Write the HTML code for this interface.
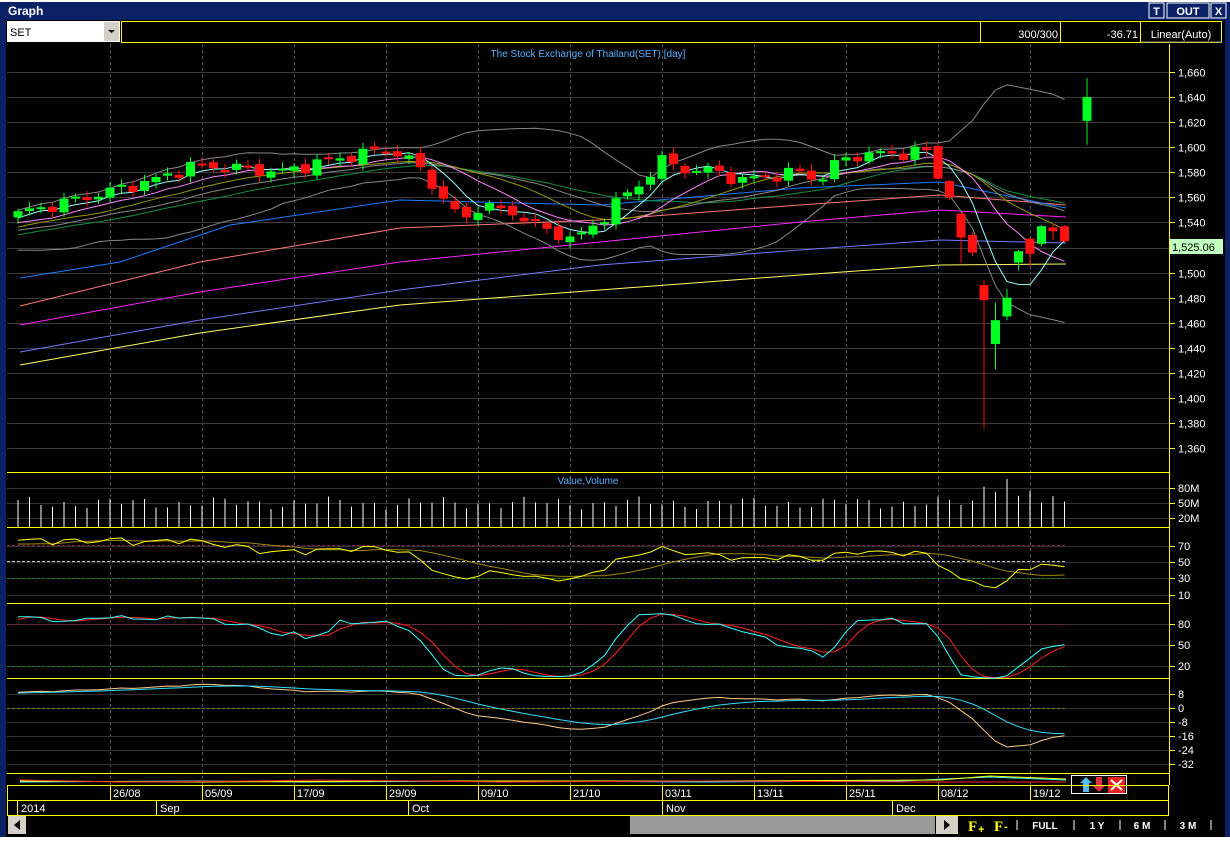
<!DOCTYPE html>
<html><head><meta charset="utf-8">
<style>
html,body{margin:0;padding:0;background:#000;width:1230px;height:842px;overflow:hidden;font-family:"Liberation Sans",sans-serif}
#frame{position:absolute;left:0;top:0;width:1230px;height:842px;background:#0c2266}
svg{position:absolute;left:0;top:0}
</style></head><body>
<div id="frame"></div>
<svg id="s" width="1230" height="842" xmlns="http://www.w3.org/2000/svg" font-family="Liberation Sans, sans-serif"></svg>
<script>
var S=document.getElementById('s');var out=[];
function a(t){out.push(t);}
a('<rect x="0" y="0" width="1230" height="842" fill="#0c2266"/>');
a('<rect x="0" y="0" width="1230" height="2" fill="#fff"/>');
a('<text x="8" y="15" fill="#fff" font-size="12" font-weight="bold">Graph</text>');
a('<rect x="1149" y="3" width="15" height="15" fill="#0c2266" stroke="#fff"/><text x="1156.5" y="15" fill="#fff" font-size="11" font-weight="bold" text-anchor="middle">T</text>');
a('<rect x="1167" y="3" width="42" height="15" fill="#0c2266" stroke="#fff"/><text x="1188" y="15" fill="#fff" font-size="11" font-weight="bold" text-anchor="middle">OUT</text>');
a('<rect x="1211" y="3" width="15" height="15" fill="#0c2266" stroke="#fff"/><text x="1218.5" y="15" fill="#fff" font-size="11" font-weight="bold" text-anchor="middle">X</text>');
a('<rect x="6" y="20" width="1219" height="817" fill="#000"/>');
a('<rect x="7" y="21" width="113" height="21" fill="#fff"/><text x="10" y="36" font-size="11" fill="#000">SET</text>');
a('<rect x="104" y="22" width="15" height="19" fill="#d4d0c8"/><path d="M108 30h7l-3.5 3z" fill="#000"/>');
a('<rect x="121.5" y="21.5" width="1100" height="21" fill="#000" stroke="#ff0"/>');
a('<line x1="980.5" y1="22" x2="980.5" y2="42" stroke="#ff0"/><line x1="1060.5" y1="22" x2="1060.5" y2="42" stroke="#ff0"/><line x1="1140.5" y1="22" x2="1140.5" y2="42" stroke="#ff0"/>');
a('<text x="1058" y="38" fill="#fff" font-size="11" text-anchor="end">300/300</text><text x="1138" y="38" fill="#fff" font-size="11" text-anchor="end">-36.71</text>');
a('<text x="1181" y="38" fill="#fff" font-size="11" text-anchor="middle">Linear(Auto)</text><line x1="1141" y1="42" x2="1222" y2="42" stroke="#888"/>');
var L=7,R=1169;
var vx=[110,202,294,386,478,570,662,754,846,938,1030];
vx.forEach(function(x){a('<line x1="'+(x+.5)+'" y1="44" x2="'+(x+.5)+'" y2="785" stroke="#555" stroke-dasharray="3,3"/>');});
function py(p){return 72+(1660-p)*1.2537;}
for(var p=1360;p<=1660;p+=20){var y=Math.round(py(p))+.5;a('<line x1="'+L+'" y1="'+y+'" x2="'+R+'" y2="'+y+'" stroke="#3a3a3a"/>');a('<line x1="'+R+'" y1="'+y+'" x2="'+(R+6)+'" y2="'+y+'" stroke="#ff0"/>');a('<text x="1178" y="'+(y+4)+'" fill="#fff" font-size="11">'+(p+'').replace(/^(\d)/,'$1,')+'</text>');}
a('<text x="588" y="57" fill="#5ab0ff" font-size="10" text-anchor="middle">The Stock Exchange of Thailand(SET) [day]</text>');
var kp=[[18,1547],[60,1555],[110,1565],[160,1575],[190,1585],[230,1584],[280,1580],[320,1588],[370,1596],[386,1598],[410,1590],[430,1575],[445,1555],[465,1542],[478,1553],[500,1550],[520,1546],[540,1535],[570,1528],[585,1530],[600,1542],[615,1555],[640,1570],[660,1590],[680,1583],[720,1580],[740,1573],[760,1576],[800,1580],[820,1574],[840,1590],[860,1594],[900,1595],[930,1597]];
function interp(x){for(var i=0;i<kp.length-1;i++){if(x<=kp[i+1][0]){var t=(x-kp[i][0])/(kp[i+1][0]-kp[i][0]);return kp[i][1]+t*(kp[i+1][1]-kp[i][1]);}}return kp[kp.length-1][1];}
var C=[];var prev=1544;
for(var i=0;i<80;i++){var x=18+i*11.5;var c=interp(x)+4*Math.sin(i*1.7)+2*Math.cos(i*2.9);var o=prev+2*Math.sin(i*3.1);var h=Math.max(o,c)+2+3*Math.abs(Math.sin(i*1.3));var l=Math.min(o,c)-2-3*Math.abs(Math.cos(i*2.1));C.push([x,o,h,l,c]);prev=c;}
var last=[[1601,1604,1574,1575],[1573,1574,1558,1560],[1547,1548,1508,1528],[1530,1532,1513,1516],[1490,1494,1376,1478],[1443,1476,1423,1462],[1465,1487,1462,1480],[1508,1518,1502,1517],[1527,1528,1505,1515],[1523,1538,1521,1537],[1536,1539,1526,1533],[1537,1538,1524,1525]];
for(var j=0;j<12;j++){var q=last[j];C.push([18+(80+j)*11.5,q[0],q[1],q[2],q[3]]);}
var cl=[];for(var k=0;k<200;k++){cl.push(1300+245*k/200+6*Math.sin(k*0.7));}
var off=cl.length;C.forEach(function(c){cl.push(c[4]);});
function sma(n,i){var s=0;for(var k=i-n+1;k<=i;k++)s+=cl[k];return s/n;}
function line(fn,col,w){var pts=[];for(var i=0;i<C.length;i++){var v=fn(i+off);if(v!==null)pts.push(C[i][0].toFixed(1)+','+py(v).toFixed(1));}a('<polyline points="'+pts.join(' ')+'" fill="none" stroke="'+col+'" stroke-width="'+(w||1)+'"/>');}
function poly(p,col){a('<polyline points="'+p+'" fill="none" stroke="'+col+'"/>');}
poly('20,365 200,333 400,305 600,290 800,275 940,265 1066,264','#ffff66');
poly('20,352 200,320 400,290 600,265 800,250 940,240 1066,243','#7777ff');
poly('20,325 200,292 400,262 620,240 800,222 940,210 1066,217','#ff22ff');
poly('20,306 200,262 400,228 600,220 800,205 940,195 1066,205','#ff7777');
poly('20,278 120,262 230,225 400,200 600,205 800,188 940,182 1066,208','#1a7cff');
function sd(n,i){var m=sma(n,i),s=0;for(var k=i-n+1;k<=i;k++)s+=(cl[k]-m)*(cl[k]-m);return Math.sqrt(s/n);}
line(function(i){return sma(20,i)+2*sd(20,i)},'#888');
line(function(i){return sma(20,i)-2*sd(20,i)},'#888');
line(function(i){return sma(25,i)},'#109040');
line(function(i){return sma(20,i)},'#888');
line(function(i){return sma(15,i)},'#999900');
line(function(i){return sma(10,i)},'#ff88ff');
line(function(i){return sma(5,i)},'#99ffff');
function candle(x,o,h,l,c){var col=c>=o?'#00ff22':'#ff1111';var yo=py(o),yc=py(c);var t=Math.min(yo,yc),b=Math.max(yo,yc);if(b-t<2){b=t+2;}a('<line x1="'+x+'" y1="'+py(h)+'" x2="'+x+'" y2="'+py(l)+'" stroke="'+col+'"/>');a('<rect x="'+(x-4.5)+'" y="'+t+'" width="9" height="'+(b-t)+'" fill="'+col+'"/>');}
C.forEach(function(c){candle(c[0],c[1],c[2],c[3],c[4]);});
candle(1087,1621,1655,1602,1640);
a('<rect x="1169" y="239" width="54" height="15" fill="#c0ffc0"/><text x="1172" y="251" fill="#000" font-size="11">1,525.06</text>');
[472,527,603,678,773,785].forEach(function(y){a('<line x1="'+L+'" y1="'+(y+.5)+'" x2="'+R+'" y2="'+(y+.5)+'" stroke="#ff0"/>');});
a('<line x1="'+(R+.5)+'" y1="44" x2="'+(R+.5)+'" y2="785" stroke="#ff0"/>');
a('<text x="588" y="484" fill="#5ab0ff" font-size="10" text-anchor="middle">Value,Volume</text>');
[[488,'80M'],[503,'50M'],[518,'20M']].forEach(function(v){a('<line x1="'+L+'" y1="'+(v[0]+.5)+'" x2="'+R+'" y2="'+(v[0]+.5)+'" stroke="#333"/><line x1="'+R+'" y1="'+(v[0]+.5)+'" x2="'+(R+6)+'" y2="'+(v[0]+.5)+'" stroke="#ff0"/><text x="1178" y="'+(v[0]+4)+'" fill="#fff" font-size="11">'+v[1]+'</text>');});
C.forEach(function(c,i){var h=24+4*Math.sin(i*1.9)+3*Math.cos(i*0.7);if(i>=84&&i<89)h=36+6*Math.sin(i);if(i==86)h=48;a('<line x1="'+c[0]+'" y1="527" x2="'+c[0]+'" y2="'+(527-h)+'" stroke="#fff"/>');});
function gl(y,lab){a('<line x1="'+L+'" y1="'+(y+.5)+'" x2="'+R+'" y2="'+(y+.5)+'" stroke="#333"/><line x1="'+R+'" y1="'+(y+.5)+'" x2="'+(R+6)+'" y2="'+(y+.5)+'" stroke="#ff0"/><text x="1178" y="'+(y+4)+'" fill="#fff" font-size="11">'+lab+'</text>');}
[[546,'70'],[562,'50'],[578,'30'],[595,'10']].forEach(function(v){gl(v[0],v[1]);});
function dash(y,col){a('<line x1="'+L+'" y1="'+y+'" x2="1066" y2="'+y+'" stroke="'+col+'" stroke-dasharray="3,2"/>');}
dash(545.5,'#802040');dash(561.5,'#ccc');dash(578.5,'#208020');
var rsi=[],ag=0,al=0;for(var i=1;i<cl.length;i++){var d=cl[i]-cl[i-1];var g=d>0?d:0,l=d<0?-d:0;if(i<=14){ag+=g/14;al+=l/14;}else{ag=(ag*13+g)/14;al=(al*13+l)/14;}rsi[i]=100-100/(1+ag/(al||1e-6));}
function pl(arr,map,col){var pts=[];for(var i=0;i<C.length;i++){pts.push(C[i][0].toFixed(1)+','+map(arr[i+off]).toFixed(1));}a('<polyline points="'+pts.join(' ')+'" fill="none" stroke="'+col+'"/>');}
var rm=function(v){return 546+(70-v)*0.8;};
var rsis=[];for(var i=0;i<cl.length;i++){var s=0,n=0;for(var k=Math.max(1,i-9);k<=i;k++){if(rsi[k]!==undefined){s+=rsi[k];n++;}}rsis[i]=n?s/n:50;}
pl(rsis,rm,'#a08800');pl(rsi,rm,'#ffff00');
[[624,'80'],[645,'50'],[666,'20']].forEach(function(v){gl(v[0],v[1]);});
dash(624.5,'#802040');dash(666.5,'#208020');
var K=[],D=[];for(var i=20;i<cl.length;i++){var hi=-1e9,lo=1e9;for(var k=i-13;k<=i;k++){hi=Math.max(hi,cl[k]+3);lo=Math.min(lo,cl[k]-3);}K[i]=100*(cl[i]-lo)/(hi-lo);}
var Ks=[];for(var i=23;i<cl.length;i++){Ks[i]=(K[i]+K[i-1]+K[i-2])/3;}for(var i=26;i<cl.length;i++){D[i]=(Ks[i]+Ks[i-1]+Ks[i-2])/3;}
var sm=function(v){return 624+(80-v)*0.7;};
pl(D,sm,'#ff2020');pl(Ks,sm,'#33ffff');
[[694,'8'],[708,'0'],[722,'-8'],[736,'-16'],[750,'-24'],[764,'-32']].forEach(function(v){gl(v[0],v[1]);});
dash(708.5,'#808000');
var e12=cl[0],e26=cl[0],M=[],Sg=[],sg=0;for(var i=0;i<cl.length;i++){e12+= (cl[i]-e12)*2/13;e26+=(cl[i]-e26)*2/27;M[i]=e12-e26;sg+=(M[i]-sg)*0.2;Sg[i]=sg;}
var mm=function(v){return 708-v*1.75;};
pl(M,mm,'#ffcc88');pl(Sg,mm,'#33ddff');
a('<polyline points="20,782 200,781 300,782 500,781 700,782 900,781 990,777 1066,780" fill="none" stroke="#33ffff"/>');
a('<polyline points="20,781 200,782 400,781 700,781 940,780 990,776 1066,779" fill="none" stroke="#ffff00"/>');
a('<polyline points="20,780 120,782 250,781 320,780 500,782 700,781 930,782 1066,782" fill="none" stroke="#ff2020"/>');
a('<rect x="1071.5" y="775.5" width="55" height="18" fill="#000" stroke="#fff"/>');
a('<path d="M1080 783l6-6 6 6h-3v9h-6v-9z" fill="#55bbee"/><path d="M1093 786h3v-9h6v9h3l-6 6z" fill="#e03040"/><rect x="1108" y="777" width="17" height="16" fill="#e82020"/><path d="M1111 780l11 10M1122 780l-11 10" stroke="#fff" stroke-width="2"/>');
a('<rect x="7.5" y="785.5" width="1161" height="30" fill="none" stroke="#ff0"/><line x1="7" y1="800.5" x2="1169" y2="800.5" stroke="#ff0"/>');
var dl=['26/08','05/09','17/09','29/09','09/10','21/10','03/11','13/11','25/11','08/12','19/12'];
vx.forEach(function(x,i){a('<line x1="'+(x+.5)+'" y1="785" x2="'+(x+.5)+'" y2="800" stroke="#ff0"/><text x="'+(x+3)+'" y="797" fill="#fff" font-size="11">'+dl[i]+'</text>');});
[[17,'2014'],[156,'Sep'],[408,'Oct'],[662,'Nov'],[892,'Dec']].forEach(function(m){a('<line x1="'+(m[0]+.5)+'" y1="800" x2="'+(m[0]+.5)+'" y2="815" stroke="#ff0"/><text x="'+(m[0]+4)+'" y="812" fill="#fff" font-size="11">'+m[1]+'</text>');});
a('<rect x="8" y="816" width="18" height="18" fill="#d4d0c8"/><path d="M20 820v10l-6-5z" fill="#000"/>');
a('<rect x="630" y="816" width="305" height="18" fill="#9a9a9a"/><rect x="936" y="816" width="22" height="18" fill="#d4d0c8"/><path d="M944 820v10l6-5z" fill="#000"/>');
a('<text x="968" y="831" fill="#ff0" font-size="15" font-weight="bold" font-family="Liberation Serif, serif">F</text><text x="978" y="833" fill="#ff0" font-size="11" font-weight="bold">+</text>');
a('<text x="994" y="831" fill="#ff0" font-size="15" font-weight="bold" font-family="Liberation Serif, serif">F</text><text x="1004" y="830" fill="#ff0" font-size="11" font-weight="bold">-</text>');
[[1017,''],[1045,'FULL'],[1074,''],[1097,'1 Y'],[1120,''],[1142,'6 M'],[1165,''],[1188,'3 M'],[1211,'']].forEach(function(b){if(b[1])a('<text x="'+b[0]+'" y="829" fill="#fff" font-size="10" font-weight="bold" text-anchor="middle">'+b[1]+'</text>');else a('<line x1="'+b[0]+'" y1="820" x2="'+b[0]+'" y2="830" stroke="#fff"/>');});
a('<rect x="0" y="837" width="1230" height="5" fill="#fff"/>');
S.innerHTML=out.join('');
</script>
</body></html>
